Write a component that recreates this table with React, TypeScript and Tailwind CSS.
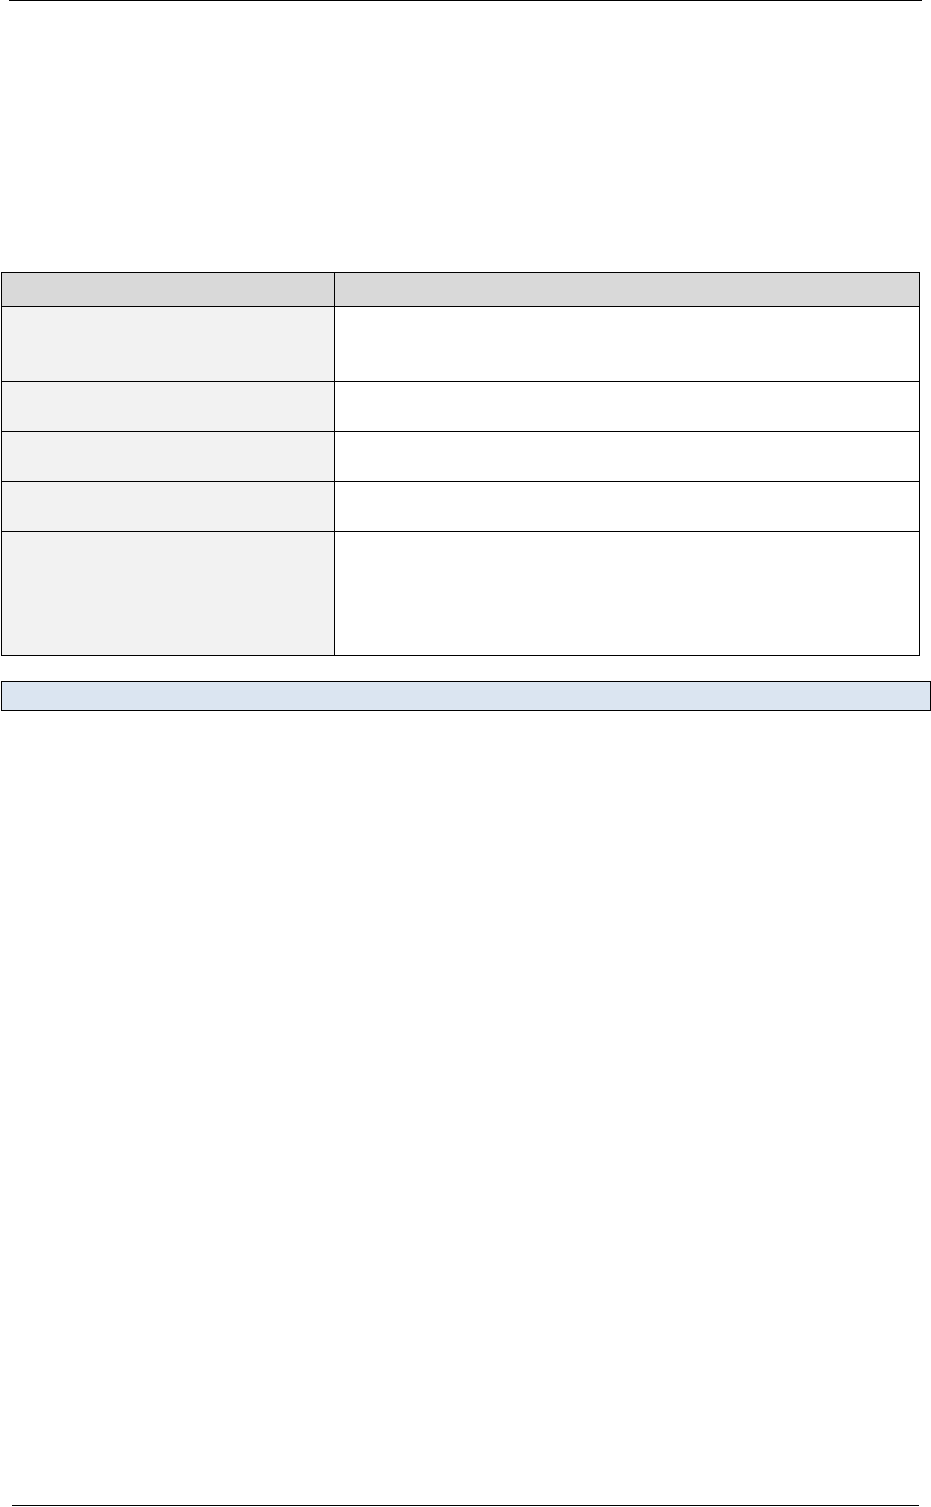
const rows = [
  { h: "h-[75px]" },
  { h: "h-[50px]" },
  { h: "h-[50px]" },
  { h: "h-[50px]" },
  { h: "h-[124px]" },
];

export default function App() {
  return (
    <div className="flex min-h-[1507px] w-[931px] flex-col bg-white font-['Liberation_Sans',sans-serif] text-black">
      {/* header rule */}
      <div className="ml-[9px] h-px w-[913px] bg-black" />

      {/* table */}
      <div className="ml-[1px] mt-[271px] grid w-[919px] grid-cols-[333px_585px] border-l border-t border-black">
        <div className="h-[34px] border-b border-r border-black bg-[#d9d9d9]" />
        <div className="h-[34px] border-b border-r border-black bg-[#d9d9d9]" />
        {rows.map((r, i) => (
          <div key={i} className="contents">
            <div className={`${r.h} border-b border-r border-black bg-[#f2f2f2]`} />
            <div className={`${r.h} border-b border-r border-black bg-white`} />
          </div>
        ))}
      </div>

      {/* shaded note bar */}
      <div className="ml-[1px] mt-[25px] h-[30px] w-[930px] border border-black bg-[#dbe5f1]" />

      {/* footer rule */}
      <div className="mb-[1px] ml-[12px] mt-auto h-px w-[907px] bg-black" />
    </div>
  );
}
